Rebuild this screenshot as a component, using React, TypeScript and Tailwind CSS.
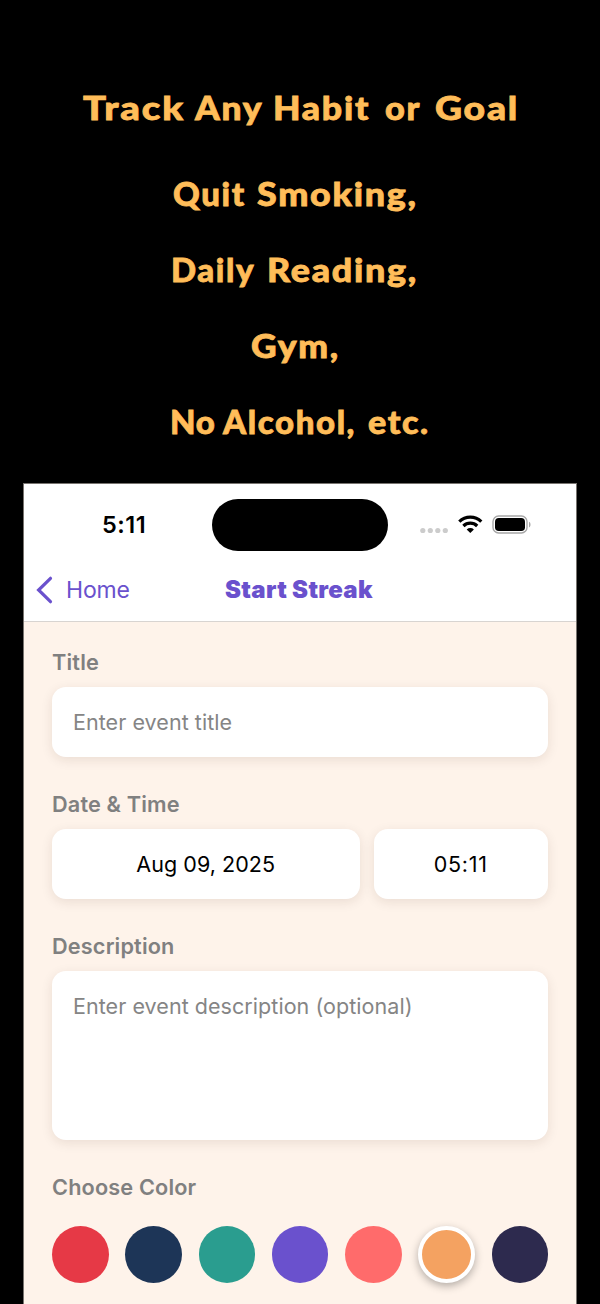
import type { ReactNode } from "react";

const colors = [
  { name: "Red", className: "bg-[#e63946]" },
  { name: "Navy", className: "bg-[#1d3557]" },
  { name: "Teal", className: "bg-[#2a9d8f]" },
  { name: "Purple", className: "bg-[#6a51cd]" },
  { name: "Coral", className: "bg-[#ff6b6b]" },
  {
    name: "Orange",
    className:
      "bg-[#f4a261] border-4 border-white shadow-[0_3px_8px_rgba(0,0,0,0.3)]",
  },
  { name: "Midnight", className: "bg-[#2d2a4e]" },
];

const Headline = () => {
  return (
    <div className="flex h-[483px] shrink-0 flex-col pt-[69px] font-['Lato',sans-serif] text-[33px] leading-[76px] font-black tracking-[1.6px] whitespace-nowrap text-[#ffbd59] [-webkit-text-stroke:0.8px_#ffbd59]">
      <h1 className="flex h-[86px]">
        <span className="ml-[83px] w-[112px] origin-left scale-x-[1.16]">
          Track
        </span>
        <span className="w-[78px] origin-left scale-x-[1.07]">Any</span>
        <span className="w-[112px] origin-left scale-x-[1.08]">Habit</span>
        <span className="w-[50px] origin-left scale-x-[1.04]">or</span>
        <span className="origin-left scale-x-[1.13]">Goal</span>
      </h1>
      <p className="flex pl-[173px]">
        <span className="w-[84px]">Quit</span>
        <span className="origin-left scale-x-[1.085]">Smoking,</span>
      </p>
      <p className="flex pl-[171px]">
        <span className="w-[96px]">Daily</span>
        <span className="origin-left scale-x-[1.085]">Reading,</span>
      </p>
      <p className="flex pl-[251px]">
        <span className="origin-left scale-x-[1.07]">Gym,</span>
      </p>
      <p className="flex pl-[170px]">
        <span className="w-[53px] tracking-[0.8px]">No</span>
        <span className="w-[145px]">Alcohol,</span>
        <span className="origin-left scale-x-[1.03]">etc.</span>
      </p>
    </div>
  );
};

const StatusBar = () => {
  return (
    <div className="flex h-[67px] pt-[15px]">
      <span className="w-[188px] pt-[9px] pl-[78px] text-[23.5px] leading-[34px] font-semibold tracking-[0.5px] text-black">
        5:11
      </span>
      <div className="h-[52px] w-[176px] rounded-full bg-black" />
      <div className="flex pt-[16px] pl-[32px]">
        <svg width="28" height="20" viewBox="0 0 28 20" fill="#cccccc">
          <circle cx="2.8" cy="15.5" r="2.6" />
          <circle cx="10.3" cy="15.5" r="2.6" />
          <circle cx="17.8" cy="15.5" r="2.6" />
          <circle cx="25.3" cy="15.5" r="2.6" />
        </svg>
        <svg
          className="ml-[10px]"
          width="25"
          height="19"
          viewBox="0 0 25 19"
          fill="none"
          stroke="#000"
          strokeWidth="3.2"
        >
          <path d="M1.3 6.6a15.8 15.8 0 0 1 22 0" />
          <path d="M5.4 11a9.8 9.8 0 0 1 13.8 0" />
          <path
            d="M12.3 17.9 8.7 14.4a5.2 5.2 0 0 1 7.2 0z"
            fill="#000"
            stroke="none"
          />
        </svg>
        <svg className="ml-[9px]" width="40" height="20" viewBox="0 0 40 20">
          <rect
            x="1"
            y="1"
            width="34"
            height="17"
            rx="5.6"
            fill="none"
            stroke="#a6a6a6"
            strokeWidth="1.4"
          />
          <rect x="3" y="3" width="30" height="13" rx="3.8" fill="#000" />
          <path d="M37 6.8c2 .8 2 4.8 0 5.6z" fill="#a6a6a6" />
        </svg>
      </div>
    </div>
  );
};

const NavBar = () => {
  return (
    <div className="flex h-[71px] items-center border-b border-[#d8d4d1] pt-[8px] text-[#6a51cd]">
      <svg
        className="ml-[11px] shrink-0"
        width="18"
        height="28"
        viewBox="0 0 18 28"
        fill="none"
        stroke="currentColor"
        strokeWidth="3.2"
        strokeLinecap="round"
        strokeLinejoin="miter"
      >
        <path d="M15.5 2.3 3.6 14l11.9 11.7" />
      </svg>
      <span className="w-[172px] pl-[13px] text-[23px] tracking-[-0.2px]">
        Home
      </span>
      <h2 className="text-[24px] font-black tracking-[0.3px] whitespace-nowrap">
        Start Streak
      </h2>
    </div>
  );
};

const Label = ({ children }: { children: ReactNode }) => {
  return (
    <div className="h-[38px] text-[21.7px] leading-[26px] font-semibold tracking-[0.15px] text-[#808080]">
      {children}
    </div>
  );
};

const Form = () => {
  return (
    <div className="flex flex-1 flex-col bg-[#fef3ea] px-[28px] pt-[27px] text-[21.5px] tracking-[0.05px]">
      <Label>Title</Label>
      <div className="mb-[34px] flex h-[70px] items-center rounded-[14px] bg-white pl-[21px] text-[#858585] shadow-[0_3px_12px_rgba(60,30,10,0.1)]">
        Enter event title
      </div>

      <Label>Date &amp; Time</Label>
      <div className="mb-[34px] flex h-[70px] gap-[14px] text-black">
        <div className="flex w-[307.5px] items-center justify-center rounded-[14px] bg-white shadow-[0_3px_12px_rgba(60,30,10,0.1)]">
          Aug 09, 2025
        </div>
        <div className="flex flex-1 items-center justify-center rounded-[14px] bg-white tracking-[0.7px] shadow-[0_3px_12px_rgba(60,30,10,0.1)]">
          05:11
        </div>
      </div>

      <Label>Description</Label>
      <div className="mb-[34px] h-[169px] rounded-[14px] bg-white pt-[21px] pl-[21px] leading-[28px] text-[#858585] shadow-[0_3px_12px_rgba(60,30,10,0.1)]">
        Enter event description (optional)
      </div>

      <Label>Choose Color</Label>
      <div className="mt-[14px] flex justify-between">
        {colors.map((color) => (
          <div
            key={color.name}
            title={color.name}
            className={`size-[56.5px] rounded-full ${color.className}`}
          />
        ))}
      </div>
    </div>
  );
};

const App = () => {
  return (
    <main className="flex h-[1304px] w-[600px] flex-col overflow-hidden bg-black">
      <Headline />
      <section className="mx-[23px] flex flex-1 flex-col border-x border-t border-[#77736f] bg-white font-['Inter',sans-serif]">
        <StatusBar />
        <NavBar />
        <Form />
      </section>
    </main>
  );
};

export default App;
